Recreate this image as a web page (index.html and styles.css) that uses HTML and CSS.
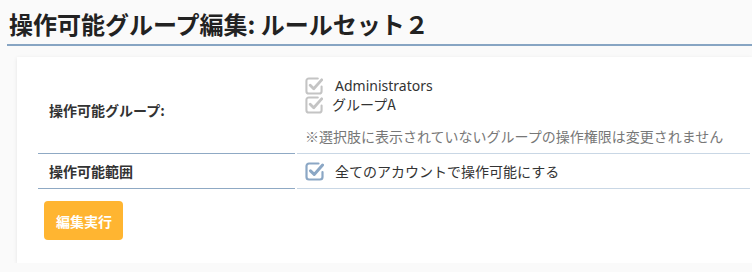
FILE: index.html
```html
<!DOCTYPE html>
<html lang="ja">
<head>
<meta charset="utf-8">
<link rel="stylesheet" href="styles.css">
</head>
<body>
<div class="page">
  <h1 class="title">操作可能グループ編集: ルールセット２</h1>
  <div class="card">
    <table class="form">
      <tr>
        <th class="label">操作可能グループ:</th>
        <td class="value groups">
          <div class="check-row disabled">
            <svg class="cb" viewBox="0 0 19 19"><path d="M13.5 1.5H4A2.5 2.5 0 0 0 1.5 4V15A2.5 2.5 0 0 0 4 17.5H15A2.5 2.5 0 0 0 17.5 15V10" fill="none" stroke-width="2.2" stroke-linecap="round"/><path d="M5.5 8.8L9.2 12.4L17.6 3" fill="none" stroke-width="3" stroke-linecap="round" stroke-linejoin="round"/></svg>
            <span class="opt latin">Administrators</span>
          </div>
          <div class="check-row disabled">
            <svg class="cb" viewBox="0 0 19 19"><path d="M13.5 1.5H4A2.5 2.5 0 0 0 1.5 4V15A2.5 2.5 0 0 0 4 17.5H15A2.5 2.5 0 0 0 17.5 15V10" fill="none" stroke-width="2.2" stroke-linecap="round"/><path d="M5.5 8.8L9.2 12.4L17.6 3" fill="none" stroke-width="3" stroke-linecap="round" stroke-linejoin="round"/></svg>
            <span class="opt kana">グループA</span>
          </div>
          <p class="note">※選択肢に表示されていないグループの操作権限は変更されません</p>
        </td>
      </tr>
      <tr>
        <th class="label">操作可能範囲</th>
        <td class="value">
          <div class="check-row active">
            <svg class="cb" viewBox="0 0 19 19"><path d="M13.5 1.5H4A2.5 2.5 0 0 0 1.5 4V15A2.5 2.5 0 0 0 4 17.5H15A2.5 2.5 0 0 0 17.5 15V10" fill="none" stroke-width="2.2" stroke-linecap="round"/><path d="M5.5 8.8L9.2 12.4L17.6 3" fill="none" stroke-width="3" stroke-linecap="round" stroke-linejoin="round"/></svg>
            <span class="opt">全てのアカウントで操作可能にする</span>
          </div>
        </td>
      </tr>
    </table>
    <button class="submit" type="button">編集実行</button>
  </div>
</div>
</body>
</html>
```

FILE: styles.css
```css
html, body {
  margin: 0;
  padding: 0;
  background: #fafafa;
  overflow: hidden;
}
body {
  font-family: "Noto Sans CJK JP", "Noto Sans", sans-serif;
  color: #333;
}
.page {
  padding-left: 7px;
}
.title {
  margin: 0;
  padding: 7px 0 3px 2px;
  font-size: 24px;
  line-height: 34px;
  font-weight: bold;
  color: #222;
  border-bottom: 2px solid #87a5c3;
}
.card {
  margin: 11px 0 0 10px;
  background: #fff;
  box-shadow: 0 1px 4px rgba(0, 0, 0, 0.09);
  padding: 10px 0 23px 21px;
}
.form {
  border-collapse: separate;
  border-spacing: 2px 0;
  margin-left: -2px;
  width: calc(100% + 2px);
}
.label {
  width: 246px;
  text-align: left;
  font-size: 14px;
  line-height: 20px;
  font-weight: bold;
  color: #333;
  padding: 7px 0 7px 11px;
  border-bottom: 1px solid #8fa9c4;
  vertical-align: middle;
}
.value {
  padding: 7px 8px 7px 8px;
  font-size: 14px;
  line-height: 20px;
  border-bottom: 1px solid #c9d7e5;
  vertical-align: middle;
}
.groups {
  padding-top: 9px;
}
.check-row {
  display: flex;
  align-items: center;
  height: 19px;
  line-height: 19px;
}
.active {
  height: 20px;
}
.cb {
  flex: none;
  width: 19px;
  height: 19px;
}
.disabled .cb {
  stroke: #c4c4c4;
  width: 18px;
  height: 18px;
  margin: 0 1px 0 0;
}
.active .cb {
  stroke: #8ba7c5;
}
.opt {
  margin-left: 11px;
  color: #333;
}
.latin {
  font-family: "Noto Sans", "Noto Sans CJK JP", sans-serif;
  margin-left: 11px;
}
.kana {
  margin-left: 8px;
}
.note {
  margin: 12px 0 0;
  color: #777;
  font-size: 14px;
  line-height: 20px;
}
.submit {
  display: block;
  margin: 12px 0 0 6px;
  height: 39px;
  padding: 0 11px 0 12px;
  border: none;
  border-radius: 4px;
  background: #ffb531;
  color: #fff;
  font-family: "Noto Sans CJK JP", sans-serif;
  font-size: 14px;
  font-weight: bold;
}
```
